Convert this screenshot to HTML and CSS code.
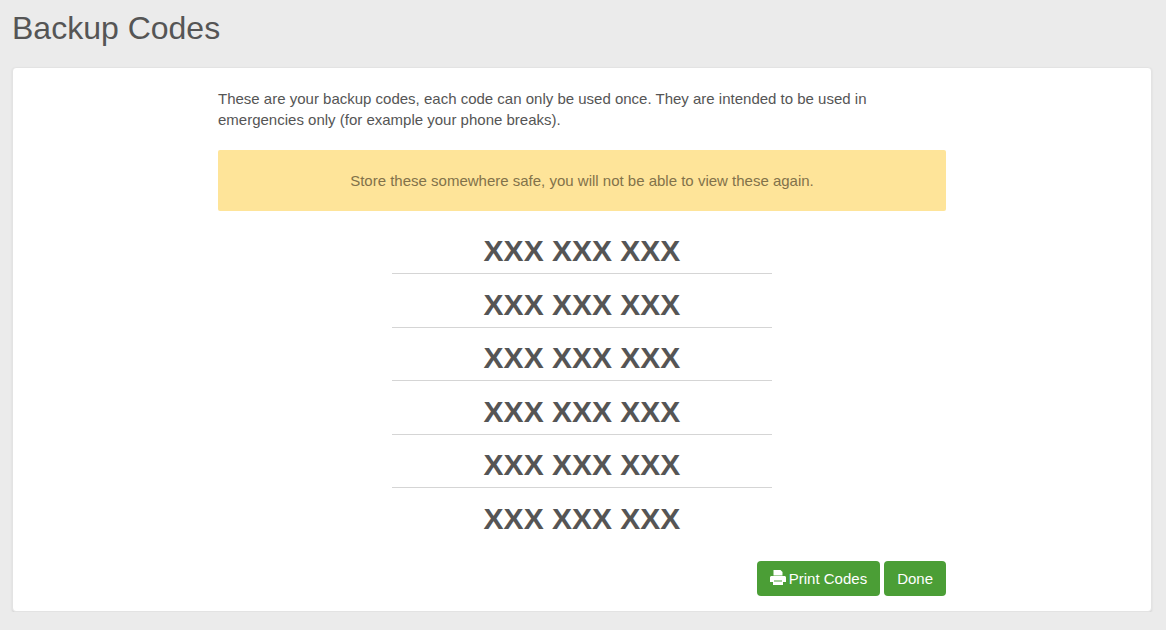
FILE: index.html
```html
<!DOCTYPE html>
<html lang="en">
<head>
    <meta charset="UTF-8">
    <title>Backup Codes</title>
    <link rel="stylesheet" href="styles.css">
</head>
<body>
    <div class="page-title">
        <h1>Backup Codes</h1>
    </div>

    <div class="panel">
        <div class="panel-inner">
            <p class="intro">These are your backup codes, each code can only be used once. They are intended to be used in emergencies only (for example your phone breaks).</p>

            <div class="alert">Store these somewhere safe, you will not be able to view these again.</div>

            <ul class="codes">
                <li>XXX XXX XXX</li>
                <li>XXX XXX XXX</li>
                <li>XXX XXX XXX</li>
                <li>XXX XXX XXX</li>
                <li>XXX XXX XXX</li>
                <li>XXX XXX XXX</li>
            </ul>

            <div class="actions">
                <a href="#" class="btn">
                    <svg class="icon" viewBox="0 0 16 15" width="16" height="15"><path fill="#fff" fill-rule="evenodd" d="M3.500 0h7L12.500 2v3.500h-9zM1.500 6h13c.8 0 1.500.7 1.500 1.500V12h-3v3H3v-3H0V7.500C0 6.700.7 6 1.500 6zM4 10.500v1h8v-1z"/></svg>
                    Print Codes
                </a>
                <a href="#" class="btn">Done</a>
            </div>
        </div>
    </div>
</body>
</html>
```

FILE: styles.css
```css
* {
    margin: 0;
    padding: 0;
    box-sizing: border-box;
}

body {
    font-family: "Liberation Sans", Arial, sans-serif;
    font-size: 15px;
    line-height: 1.5;
    background-color: #ebebeb;
    color: #555;
}

.page-title {
    padding: 8px 12px 0;
    height: 67px;
}

.page-title h1 {
    font-size: 32px;
    font-weight: 400;
    line-height: 40px;
}

.panel {
    margin: 0 14px 0 12px;
    height: 545px;
    background: white;
    border: 1px solid #e3e3e3;
    border-radius: 4px;
    box-shadow: 0 1px 2px rgba(0,0,0,0.1);
    padding-top: 20px;
}

.panel-inner {
    width: 728px;
    margin: 0 auto;
}

.intro {
    line-height: 21px;
    margin-bottom: 20px;
}

.alert {
    height: 61px;
    line-height: 61px;
    text-align: center;
    background-color: #fee499;
    color: #82724a;
    border-radius: 2px;
    margin-bottom: 9.700px;
}

.codes {
    list-style: none;
    width: 380px;
    margin: 0 auto;
}

.codes li {
    height: 53.500px;
    padding-top: 9.700px;
    line-height: 42px;
    font-size: 30px;
    font-weight: 700;
    text-align: center;
    border-bottom: 1px solid #d5d5d5;
}

.codes li:last-child {
    border-bottom: none;
}

.actions {
    display: flex;
    justify-content: flex-end;
    gap: 4px;
    margin-top: 19.300px;
}

.btn {
    display: inline-flex;
    align-items: center;
    gap: 3px;
    height: 35px;
    padding: 1px 13px 0;
    background-color: #4b9e36;
    color: white;
    text-decoration: none;
    border-radius: 4px;
}

.icon {
    margin-top: -3px;
}
```
